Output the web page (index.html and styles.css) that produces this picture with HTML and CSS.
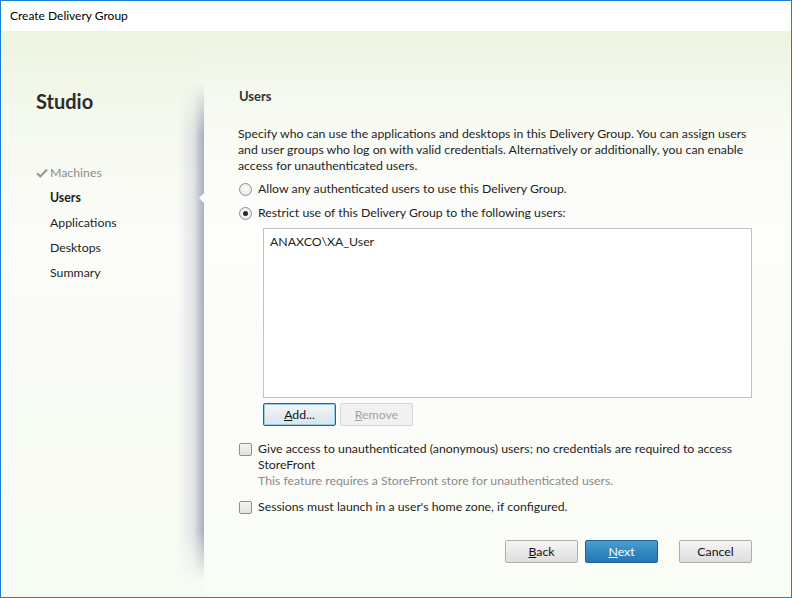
FILE: index.html
```html
<!DOCTYPE html>
<html lang="en">
<head>
<meta charset="utf-8">
<title>Create Delivery Group</title>
<link rel="stylesheet" href="styles.css">
</head>
<body>
<div class="window">
  <div class="titlebar">Create Delivery Group</div>
  <div class="wizard">
    <nav class="steps">
      <h1 class="brand">Studio</h1>
      <ul class="step-list">
        <li class="step done">
          <svg class="check" viewBox="0 0 12 10" width="12" height="10"><path d="M1 5.2 L4.3 8.4 L11 1.4" fill="none" stroke="#9a9a9a" stroke-width="2.2"/></svg>
          Machines
        </li>
        <li class="step current">Users</li>
        <li class="step">Applications</li>
        <li class="step">Desktops</li>
        <li class="step">Summary</li>
      </ul>
    </nav>
    <main class="content">
      <h2 class="page-title">Users</h2>
      <p class="intro">Specify who can use the applications and desktops in this Delivery Group. You can assign users<br>and user groups who log on with valid credentials. Alternatively or additionally, you can enable<br>access for unauthenticated users.</p>
      <div class="option">
        <span class="radio"></span>
        <span>Allow any authenticated users to use this Delivery Group.</span>
      </div>
      <div class="option">
        <span class="radio checked"></span>
        <span>Restrict use of this Delivery Group to the following users:</span>
      </div>
      <div class="user-list">
        <div class="user">ANAXCO\XA_User</div>
      </div>
      <div class="list-actions">
        <button class="btn focused"><u>A</u>dd...</button>
        <button class="btn disabled"><u>R</u>emove</button>
      </div>
      <div class="option check-option">
        <span class="checkbox"></span>
        <div class="option-text">
          <div>Give access to unauthenticated (anonymous) users; no credentials are required to access<br>StoreFront</div>
          <div class="note">This feature requires a StoreFront store for unauthenticated users.</div>
        </div>
      </div>
      <div class="option check-option second">
        <span class="checkbox"></span>
        <div class="option-text">Sessions must launch in a user's home zone, if configured.</div>
      </div>
      <div class="footer">
        <button class="btn"><u>B</u>ack</button>
        <button class="btn primary"><u>N</u>ext</button>
        <button class="btn cancel">Cancel</button>
      </div>
    </main>
  </div>
</div>
</body>
</html>
```
FILE: styles.css
```css
* { box-sizing: border-box; }
html, body { margin: 0; padding: 0; }
body {
  width: 792px;
  height: 598px;
  overflow: hidden;
  font-family: "Lato", "Open Sans", sans-serif;
  font-size: 12.3px;
  color: #1e1e1e;
}
.window {
  width: 792px;
  height: 598px;
  border: 1px solid #1a7fd6;
  display: flex;
  flex-direction: column;
  background: #fff;
}
.titlebar {
  height: 30px;
  line-height: 30px;
  padding-left: 9px;
  font-size: 12px;
  color: #000;
  background: #fff;
  flex: none;
}
.wizard {
  flex: 1;
  display: flex;
  background: linear-gradient(180deg, #edf4e1 0%, #f4f8ec 12%, #fbfcf8 35%, #f8fbf3 100%);
}
.steps {
  position: relative;
  width: 203px;
  flex: none;
  padding: 58px 0 0 35px;
}
.steps::after {
  content: "";
  position: absolute;
  top: 52px;
  bottom: 16px;
  right: 0;
  width: 26px;
  background: linear-gradient(90deg, rgba(205,208,218,0) 0%, rgba(200,204,214,0.5) 60%, rgba(160,165,180,0.9) 100%);
  -webkit-mask-image: linear-gradient(180deg, transparent 0%, #000 10%, #000 90%, transparent 100%);
  mask-image: linear-gradient(180deg, transparent 0%, #000 10%, #000 90%, transparent 100%);
}
.steps::before {
  content: "";
  position: absolute;
  right: 0;
  top: 162px;
  width: 0;
  height: 0;
  border-top: 5px solid transparent;
  border-bottom: 5px solid transparent;
  border-right: 5px solid #fdfdfb;
  z-index: 2;
}
.brand {
  margin: 0;
  font-size: 20px;
  line-height: 24px;
  font-weight: 700;
  color: #2b2b2b;
}
.step-list {
  list-style: none;
  margin: 47px 0 0 0;
  padding: 0;
}
.step {
  height: 25px;
  line-height: 25px;
  padding-left: 14px;
  position: relative;
  color: #1e1e1e;
}
.step.done { color: #8c8c8c; }
.step.current { font-weight: 700; }
.check {
  position: absolute;
  left: 0;
  top: 8px;
}
.content {
  flex: 1;
  padding: 56px 15px 0 34px;
  background: linear-gradient(180deg, rgba(255,255,255,0) 0%, rgba(255,255,255,0.5) 30%, rgba(255,255,255,0.3) 100%);
}
.page-title {
  margin: 0;
  font-size: 13px;
  line-height: 18px;
  font-weight: 700;
  color: #333;
  padding-left: 1px;
}
.intro {
  margin: 21px 0 0 0;
  line-height: 16px;
  white-space: nowrap;
}
.option {
  display: flex;
  align-items: center;
  gap: 6px;
  height: 16px;
  line-height: 16px;
  margin-top: 7px;
  padding-left: 1px;
}
.option + .option { margin-top: 8px; }
.radio {
  width: 13px;
  height: 13px;
  border-radius: 50%;
  border: 1px solid #8e8f8f;
  background: radial-gradient(circle at 50% 40%, #fbfbfb 0%, #e6e6e6 90%);
  flex: none;
  display: flex;
  align-items: center;
  justify-content: center;
}
.radio.checked::after {
  content: "";
  width: 5px;
  height: 5px;
  border-radius: 50%;
  background: #2a2a2a;
}
.user-list {
  margin: 7px 0 0 25px;
  width: 489px;
  height: 170px;
  border: 1px solid #c3c3c3;
  background: #fff;
  padding: 5px 0 0 6px;
  line-height: 16px;
}
.list-actions {
  display: flex;
  gap: 4px;
  margin: 5px 0 0 25px;
}
.btn {
  width: 73px;
  height: 23px;
  font-family: inherit;
  font-size: 12.3px;
  color: #111;
  border: 1px solid #adadad;
  border-radius: 2px;
  background: linear-gradient(180deg, #f6f6f6 0%, #e9e9e9 50%, #dedede 100%);
  padding: 0;
  line-height: 21px;
}
.btn.focused {
  border: 1px solid #2c628b;
  box-shadow: inset 0 0 0 1px #9ccbe8;
  background: linear-gradient(180deg, #f3f7fa 0%, #e5edf3 50%, #d9e4ec 100%);
}
.btn.disabled {
  color: #a3a3a3;
  border-color: #d6d6d6;
  background: #f1f1f1;
}
.check-option {
  align-items: flex-start;
  height: auto;
  margin-top: 15px;
}
.check-option.second { margin-top: 10px; }
.checkbox {
  width: 13px;
  height: 13px;
  border: 1px solid #8f8f8f;
  border-radius: 2px;
  background: linear-gradient(180deg, #f4f4f4 0%, #e2e2e2 100%);
  flex: none;
  margin-top: 2px;
}
.note { color: #8a8a8a; }
.footer {
  display: flex;
  justify-content: flex-end;
  margin-top: 25px;
  padding-right: 24px;
  gap: 7px;
}
.btn.primary {
  color: #fff;
  border-color: #1e6195;
  background: linear-gradient(180deg, #4a9fd0 0%, #3289c2 50%, #2677b3 100%);
}
.btn.cancel { margin-left: 14px; }
```
